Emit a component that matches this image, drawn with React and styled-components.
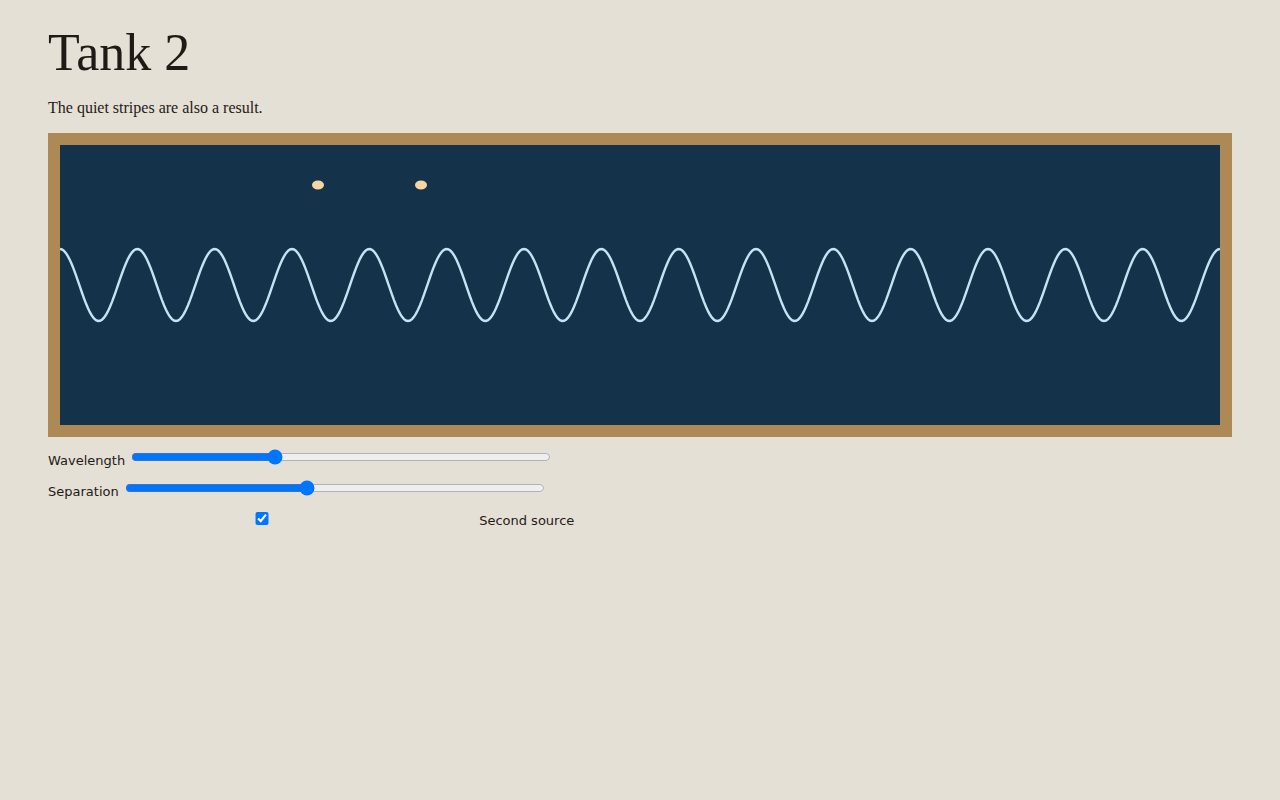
import React, { useState } from 'react'
import styled, { createGlobalStyle } from 'styled-components'

const GlobalStyle = createGlobalStyle`
  html, body {
    margin: 0;
    background: #e5e0d6;
  }
`

const Page = styled.main`
  padding: 23px 48px;
  color: #1f1a15;
  font-family: 'Liberation Serif', 'Times New Roman', serif;
`

const Title = styled.h1`
  margin: 0 0 17px;
  font-size: 52px;
  font-weight: normal;
`

const Lede = styled.p`
  margin: 17px 0 16px;
  font-size: 16px;
`

const Tank = styled.div`
  border: 12px solid #ad8a55;
  background: #14324a;
  height: 280px;
`

const Surface = styled.svg`
  display: block;
  width: 100%;
  height: 100%;
`

const Controls = styled.div`
  font-family: 'DejaVu Sans', Verdana, sans-serif;
  font-size: 13px;
  color: #1f1a15;
`

const Control = styled.label`
  display: block;
  margin-top: 10px;

  input {
    width: 420px;
  }
`

const W = 1160
const H = 280
const PERIODS = 15
const AMP = 36

function wavePath() {
  const pts = []
  const lambda = W / PERIODS
  for (let x = 0; x <= W; x += 2) {
    const y = H / 2 - AMP * Math.cos((2 * Math.PI * x) / lambda)
    pts.push(`${x === 0 ? 'M' : 'L'}${x},${y.toFixed(2)}`)
  }
  return pts.join(' ')
}

const sources = [258, 361]

export default function App() {
  const [wavelength, setWavelength] = useState(33.5)
  const [separation, setSeparation] = useState(43)
  const [second, setSecond] = useState(true)

  return (
    <>
      <GlobalStyle />
      <Page>
        <Title>Tank 2</Title>
        <Lede>The quiet stripes are also a result.</Lede>
        <Tank>
          <Surface viewBox={`0 0 ${W} ${H}`} preserveAspectRatio="none">
            {sources.slice(0, second ? 2 : 1).map(x => (
              <ellipse key={x} cx={x} cy={40} rx={6} ry={4.5} fill="#f5d5a3" />
            ))}
            <path d={wavePath()} fill="none" stroke="#c4e4f4" strokeWidth="2.4" />
          </Surface>
        </Tank>
        <Controls>
          <Control>
            Wavelength{' '}
            <input
              type="range"
              min="0"
              max="100"
              step="0.5"
              value={wavelength}
              onChange={e => setWavelength(+e.target.value)}
            />
          </Control>
          <Control>
            Separation{' '}
            <input
              type="range"
              min="0"
              max="100"
              value={separation}
              onChange={e => setSeparation(+e.target.value)}
            />
          </Control>
          <Control>
            <input
              type="checkbox"
              checked={second}
              onChange={e => setSecond(e.target.checked)}
            />{' '}
            Second source
          </Control>
        </Controls>
      </Page>
    </>
  )
}
